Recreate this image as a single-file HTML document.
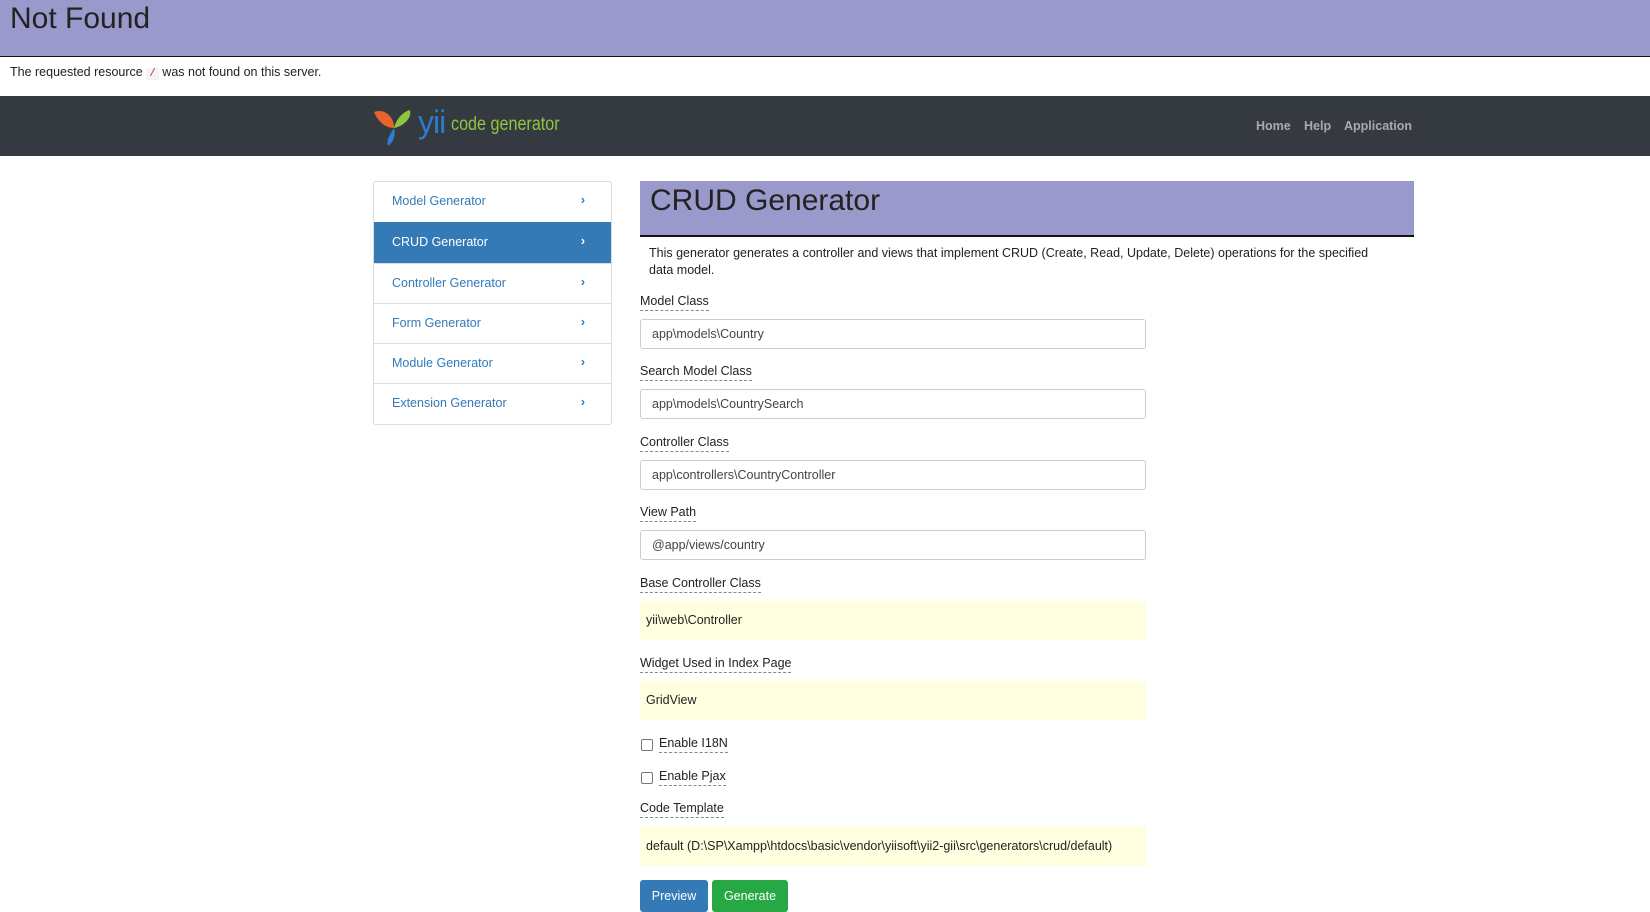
<!DOCTYPE html>
<html><head><meta charset="utf-8"><style>
*{box-sizing:border-box;margin:0;padding:0}
body{width:1650px;height:909px;overflow:hidden;background:#fff;font-family:"Liberation Sans",sans-serif;color:#222;font-size:13px;position:relative}
.a{position:absolute}
.nf{left:0;top:0;width:1650px;height:57px;background:#9a99cb;border-bottom:1px solid #111}
.nf h1{font-weight:normal;font-size:30px;position:absolute;left:10px;top:2px;color:#222}
.msg{left:10px;top:65px;font-size:12.5px}
.msg code{background:#f4f4f4;color:#c7254e;padding:0 3px;font-size:11px}
.nav{left:0;top:96px;width:1650px;height:60px;background:#343a40}
.nav a{position:absolute;top:23px;color:#aaa;font-size:12.5px;font-weight:bold;text-decoration:none}
.side{left:373px;top:181px;width:239px;border:1px solid #ddd;border-radius:3px}
.side div{height:40.3px;border-top:1px solid #ddd;color:#337ab7;padding:12px 0 0 18px;position:relative;font-size:12.5px}
.side div:first-child{border-top:none}
.side div span{position:absolute;right:26px;top:11px;font-weight:bold}
.side .on{background:#337ab7;color:#fff;border-color:#337ab7}
.hd{left:640px;top:181px;width:774px;height:56px;background:#9a99cb;border-bottom:2px solid #111}
.hd h2{font-weight:normal;font-size:30px;position:absolute;left:10px;top:3px}
.desc{left:649px;top:245px;width:735px;font-size:12.5px;line-height:17px}
.lbl{position:absolute;left:640px;font-size:12.5px;border-bottom:1px dashed #888;padding-bottom:1px;line-height:15px}
.inp{position:absolute;left:640px;width:506px;height:30px;border:1px solid #ccc;border-radius:3px;padding:7px 11px;font-size:12.5px;color:#444}
.yel{position:absolute;left:640px;width:506px;height:39px;background:#ffffe0;padding:12px 6px;font-size:12.5px}
.cb{position:absolute;left:641px;width:12px;height:12px;border:1px solid #777;border-radius:2px}
.btn{position:absolute;top:880px;height:32px;color:#fff;border-radius:3px;font-size:12.5px;padding:9px 0;text-align:center}
</style></head><body>
<div class="a nf"><h1>Not Found</h1></div>
<div class="a msg">The requested resource <code>/</code> was not found on this server.</div>
<div class="a nav">
<svg class="a" style="left:372px;top:10px" width="42" height="42" viewBox="0 0 42 42">
<path d="M2 6 C12 2 22 10 22 22 C14 22 6 16 2 6Z" fill="#e8642c"/>
<path d="M22 22 C18 28 14 34 16 40 C22 36 24 28 22 22Z" fill="#2e7bd1"/>
<path d="M22 22 C24 14 30 6 38 4 C40 12 32 20 22 22Z" fill="#8dc63f"/>
</svg>
<div class="a" style="left:418px;top:8px;color:#2b7ccf;font-size:32px;letter-spacing:-1px">yii</div>
<div class="a" style="left:451px;top:18px;color:#8dc63f;font-size:19px;transform:scaleX(0.85);transform-origin:left">code generator</div>
<a style="left:1256px">Home</a><a style="left:1304px">Help</a><a style="left:1344px">Application</a>
</div>
<div class="a side">
<div>Model Generator<span>›</span></div>
<div class="on">CRUD Generator<span>›</span></div>
<div>Controller Generator<span>›</span></div>
<div>Form Generator<span>›</span></div>
<div>Module Generator<span>›</span></div>
<div>Extension Generator<span>›</span></div>
</div>
<div class="a hd"><h2>CRUD Generator</h2></div>
<div class="a desc">This generator generates a controller and views that implement CRUD (Create, Read, Update, Delete) operations for the specified data model.</div>
<div class="lbl" style="top:294px">Model Class</div>
<div class="inp" style="top:319px">app\models\Country</div>
<div class="lbl" style="top:364px">Search Model Class</div>
<div class="inp" style="top:389px">app\models\CountrySearch</div>
<div class="lbl" style="top:435px">Controller Class</div>
<div class="inp" style="top:460px">app\controllers\CountryController</div>
<div class="lbl" style="top:505px">View Path</div>
<div class="inp" style="top:530px">@app/views/country</div>
<div class="lbl" style="top:576px">Base Controller Class</div>
<div class="yel" style="top:601px">yii\web\Controller</div>
<div class="lbl" style="top:656px">Widget Used in Index Page</div>
<div class="yel" style="top:681px">GridView</div>
<div class="cb" style="top:739px"></div><div class="lbl" style="top:736px;left:659px">Enable I18N</div>
<div class="cb" style="top:772px"></div><div class="lbl" style="top:769px;left:659px">Enable Pjax</div>
<div class="lbl" style="top:801px">Code Template</div>
<div class="yel" style="top:827px">default (D:\SP\Xampp\htdocs\basic\vendor\yiisoft\yii2-gii\src\generators\crud/default)</div>
<div class="btn" style="left:640px;width:68px;background:#337ab7">Preview</div>
<div class="btn" style="left:712px;width:76px;background:#28a745">Generate</div>
</body></html>
